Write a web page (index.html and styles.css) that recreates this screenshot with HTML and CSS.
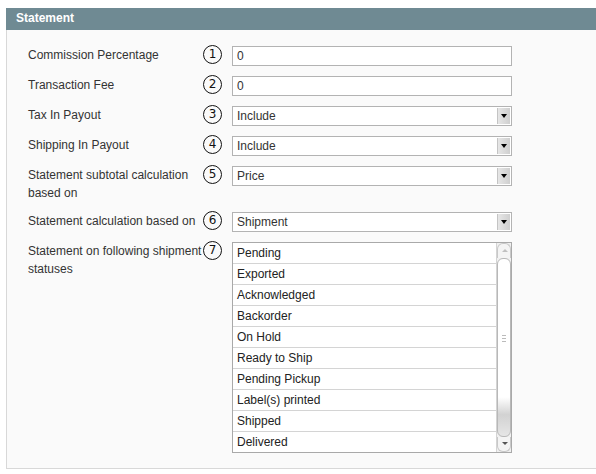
FILE: index.html
```html
<!DOCTYPE html>
<html>
<head>
<meta charset="utf-8">
<link rel="stylesheet" href="styles.css">
</head>
<body>
<div class="panel">
  <div class="head">Statement</div>
  <div class="content">
    <div class="row">
      <div class="label">Commission Percentage</div>
      <div class="num">1</div>
      <div class="field text">0</div>
    </div>
    <div class="row">
      <div class="label">Transaction Fee</div>
      <div class="num">2</div>
      <div class="field text">0</div>
    </div>
    <div class="row">
      <div class="label">Tax In Payout</div>
      <div class="num">3</div>
      <div class="field select">Include<span class="arrow"></span></div>
    </div>
    <div class="row">
      <div class="label">Shipping In Payout</div>
      <div class="num">4</div>
      <div class="field select">Include<span class="arrow"></span></div>
    </div>
    <div class="row">
      <div class="label">Statement subtotal calculation based on</div>
      <div class="num">5</div>
      <div class="field select">Price<span class="arrow"></span></div>
    </div>
    <div class="row">
      <div class="label">Statement calculation based on</div>
      <div class="num">6</div>
      <div class="field select">Shipment<span class="arrow"></span></div>
    </div>
    <div class="row">
      <div class="label wide">Statement on following shipment statuses</div>
      <div class="num">7</div>
      <div class="listbox">
        <ul class="items">
          <li>Pending</li>
          <li>Exported</li>
          <li>Acknowledged</li>
          <li>Backorder</li>
          <li>On Hold</li>
          <li>Ready to Ship</li>
          <li>Pending Pickup</li>
          <li>Label(s) printed</li>
          <li>Shipped</li>
          <li>Delivered</li>
        </ul>
        <div class="scroll">
          <div class="btn up"></div>
          <div class="thumb"><span class="grip"></span></div>
          <div class="btn down"></div>
        </div>
      </div>
    </div>
  </div>
</div>
</body>
</html>
```
FILE: styles.css
```css
html, body {
  margin: 0;
  padding: 0;
  background: #ffffff;
  overflow: hidden;
}
body {
  font-family: "Liberation Sans", Arial, sans-serif;
  font-size: 12px;
  color: #333333;
}
.panel {
  margin: 8px 0 0 6px;
  width: 600px;
}
.head {
  height: 22px;
  line-height: 21px;
  background: #6f8a93;
  color: #ffffff;
  font-weight: bold;
  font-size: 12px;
  padding-left: 10px;
}
.content {
  background: #fafafa;
  border-left: 1px solid #d8d8d8;
  border-bottom: 1px solid #d8d8d8;
  padding: 16px 0 15px 21px;
  display: flex;
  flex-direction: column;
  gap: 10px;
}
.row {
  display: flex;
  align-items: flex-start;
}
.label {
  width: 175px;
  flex: none;
  line-height: 18px;
  padding-top: 0;
  box-sizing: border-box;
  color: #333333;
}
.label.wide {
  width: 187px;
  margin-right: -12px;
}
.num {
  flex: none;
  width: 19px;
  height: 19px;
  box-sizing: border-box;
  border: 1.5px solid #111111;
  border-radius: 50%;
  background: #fafafa;
  color: #111111;
  font-family: "DejaVu Sans", sans-serif;
  font-size: 12px;
  line-height: 16px;
  text-align: center;
  margin: -1px 10px 0 0;
  position: relative;
  z-index: 1;
}
.field {
  flex: none;
  width: 280px;
  height: 20px;
  box-sizing: border-box;
  border: 1px solid #b3b3b3;
  background: #ffffff;
  line-height: 18px;
  padding-left: 4px;
  color: #333333;
  position: relative;
}
.arrow {
  position: absolute;
  right: 1px;
  top: 1px;
  width: 12px;
  height: 16px;
  background: linear-gradient(to right, #e6e6e6, #cfcfcf);
  border-left: 1px solid #c4c4c4;
}
.arrow::after {
  content: "";
  position: absolute;
  left: 3px;
  top: 6px;
  border-left: 3.5px solid transparent;
  border-right: 3.5px solid transparent;
  border-top: 4px solid #000000;
}
.listbox {
  flex: none;
  width: 280px;
  height: 211px;
  box-sizing: border-box;
  border: 1px solid #a9a9a9;
  background: #ffffff;
  display: flex;
}
.items {
  list-style: none;
  margin: 0;
  padding: 0;
  flex: 1;
}
.items li {
  height: 21px;
  line-height: 20px;
  box-sizing: border-box;
  border-bottom: 1px solid #d4d4d4;
  padding-left: 4px;
  color: #222222;
}
.items li:last-child {
  border-bottom: none;
}
.scroll {
  flex: none;
  width: 14px;
  display: flex;
  flex-direction: column;
  background: #f0f0f0;
  border-left: 1px solid #d4d4d4;
}
.btn {
  height: 14px;
  position: relative;
  background: #f4f4f4;
}
.btn.up {
  border: 1px solid #c8c8c8;
  border-bottom: none;
  border-radius: 6px 6px 0 0;
}
.btn.up::after {
  content: "";
  position: absolute;
  left: 4px;
  top: 5px;
  border-left: 3px solid transparent;
  border-right: 3px solid transparent;
  border-bottom: 3px solid #c0c0c0;
}
.btn.down {
  border: 1px solid #c8c8c8;
  border-top: none;
  border-radius: 0 0 6px 6px;
}
.btn.down::after {
  content: "";
  position: absolute;
  left: 4px;
  top: 5px;
  border-left: 3px solid transparent;
  border-right: 3px solid transparent;
  border-top: 3px solid #555555;
}
.thumb {
  flex: 1;
  position: relative;
  background: linear-gradient(to bottom, #ffffff 0%, #ffffff 78%, #d2d2d2 88%, #e6e6e6 100%);
  border: 1px solid #b8b8b8;
  border-radius: 6px;
}
.grip {
  position: absolute;
  left: 4px;
  top: 76px;
  width: 4px;
  height: 5px;
  border-top: 1px solid #bbbbbb;
  border-bottom: 1px solid #bbbbbb;
}
.grip::after {
  content: "";
  position: absolute;
  left: 0;
  top: 2px;
  width: 4px;
  border-top: 1px solid #bbbbbb;
}
```
